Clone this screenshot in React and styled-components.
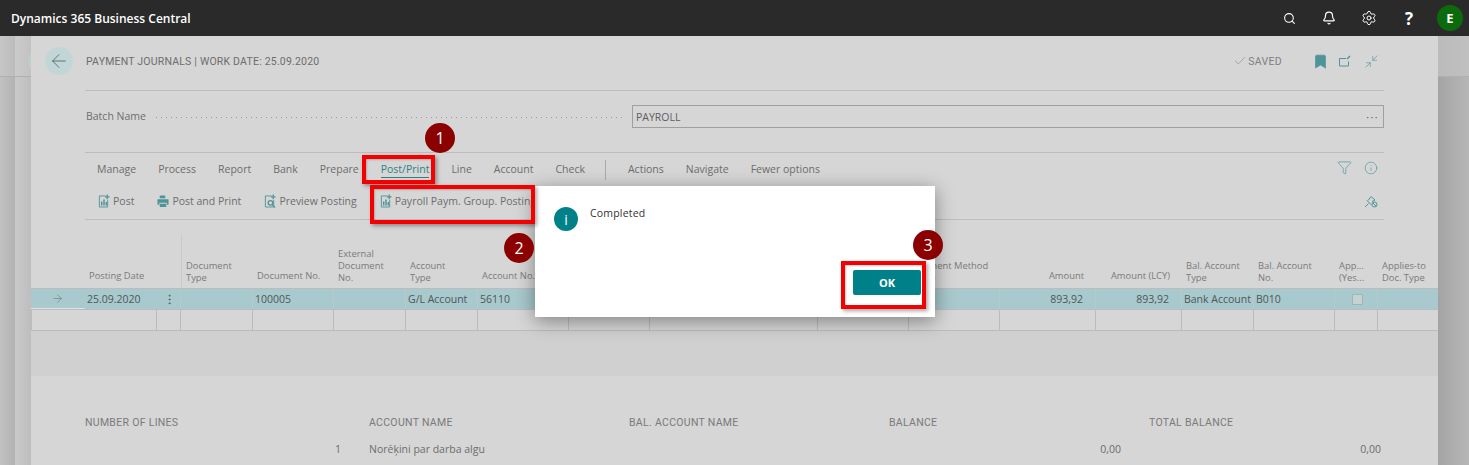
import styled, { createGlobalStyle } from "styled-components";
import { Search, Bell, Settings, Check, Filter, Info, ArrowLeft, ArrowRight, Minimize2, Bookmark, EllipsisVertical } from "lucide-react";

const GlobalStyle = createGlobalStyle`
  html, body { margin: 0; padding: 0; background: #c4c4c4; overflow: hidden; }
  body { font-family: "Open Sans", "Noto Sans", sans-serif; }
`;

const teal = "#4f9499";
const textGrey = "#6d6d6d";
const columns = "54px 72px 24px 72px 81px 72px 72px 91px 81px 168px 91px 91px 96px 86px 72px 81px 43px 60px";
const footerColumns = "284px 260px 260px 260px 260px";

const Page = styled.div`
  position: relative;
  width: 1469px;
  height: 465px;
  overflow: hidden;
`;

/* barra superior */
const TopBar = styled.header`
  height: 36px;
  background: #2a2a2a;
  display: flex;
  align-items: center;
  padding: 0 6px 0 11px;
  color: #fff;
`;
const Brand = styled.div`
  font-size: 12px;
  font-weight: 600;
  flex: 1;
`;
const TopIcons = styled.div`
  display: flex;
  align-items: center;
`;
const TopIcon = styled.div`
  width: 40px;
  display: flex;
  justify-content: center;
  align-items: center;
  font-size: ${(p) => (p.$big ? "17px" : "12px")};
  font-weight: 700;
`;
const Avatar = styled.div`
  width: 26px;
  height: 26px;
  margin-left: 8px;
  border-radius: 50%;
  background: #0b6a0b;
  display: flex;
  align-items: center;
  justify-content: center;
  font-size: 13px;
  font-weight: 700;
`;

/* fondo y panel */
const Stage = styled.main`
  display: grid;
  grid-template-columns: 31px 1407px 31px;
  height: 429px;
`;
const Gutter = styled.div`
  display: flex;
  flex-direction: column;
`;
const GutterTop = styled.div`
  height: 40px;
  border-bottom: 1px solid #b0b0b0;
  background: ${(p) =>
    p.$right
      ? "linear-gradient(90deg, #bbbbbb, #c0c0c0)"
      : "radial-gradient(circle at 43px 25px, #bdcfd0 14px, transparent 15px), linear-gradient(90deg, #c6c6c6 0, #bcbcbc 15px, #cbcbcb 15px, #c2c2c2 100%)"};
`;
const GutterBody = styled.div`
  flex: 1;
  background: ${(p) =>
    p.$right
      ? "linear-gradient(90deg, #a4a4a4 0%, #aeaeae 50%, #b6b6b6 100%)"
      : "linear-gradient(90deg, #c2c2c2 0, #b2b2b2 15px, #c9c9c9 15px, #bebebe 100%)"};
`;
const Panel = styled.section`
  background: #d6d6d6;
  display: flex;
  flex-direction: column;
  min-width: 0;
`;
const Content = styled.div`
  padding: 0 54px 0 54px;
`;
const HeaderRow = styled.div`
  display: flex;
  align-items: center;
  padding-bottom: 4px;
  height: 50px;
  border-bottom: 1px solid #bdbdbd;
`;
const BackButton = styled.div`
  width: 28px;
  height: 28px;
  margin-left: -40px;
  border-radius: 50%;
  background: #c2d6d7;
  color: #4f5f60;
  display: flex;
  align-items: center;
  justify-content: center;
`;
const PageTitle = styled.div`
  flex: 1;
  margin-left: 13px;
  font-family: Roboto, "Liberation Sans", sans-serif;
  font-size: 10.5px;
  letter-spacing: 0.2px;
  color: ${textGrey};
`;
const Saved = styled.div`
  display: flex;
  align-items: center;
  gap: 1px;
  font-family: Roboto, "Liberation Sans", sans-serif;
  font-size: 10.5px;
  letter-spacing: 0.3px;
  color: #808080;
  margin-right: 30px;
`;
const HeadIcons = styled.div`
  display: flex;
  align-items: center;
  gap: 13px;
  color: ${teal};
  margin-right: 5px;
`;
const SavedBookmark = styled(Bookmark)`
  margin-right: -4px;
`;

const BatchRow = styled.div`
  height: 47px;
  padding-top: 14px;
  display: flex;
  align-items: flex-start;
  border-bottom: 1px solid #bdbdbd;
`;
const BatchLabel = styled.div`
  font-size: 10.5px;
  line-height: 23px;
  color: ${textGrey};
  margin: 0 0 0 1px;
`;
const Dots = styled.div`
  flex: 1;
  height: 1px;
  margin: 12px 7px 0 10px;
  background: repeating-linear-gradient(90deg, #9a9a9a 0 1px, transparent 1px 5px);
`;
const BatchInput = styled.div`
  width: 752px;
  height: 23px;
  box-sizing: border-box;
  border: 1px solid #9f9f9f;
  display: flex;
  align-items: center;
  justify-content: space-between;
  padding: 0 4px 0 3px;
  font-size: 10.5px;
  color: #5d5d5d;
`;
const InputDots = styled.span`
  letter-spacing: 1.5px;
`;

const RibbonRow = styled.nav`
  height: 33px;
  display: flex;
  align-items: center;
  gap: 22px;
  padding-left: 12px;
  font-size: 10.5px;
  color: ${textGrey};
`;
const RibbonItem = styled.span`
  padding-bottom: 1px;
  color: ${(p) => (p.$active ? "#2e8088" : "inherit")};
  border-bottom: 1px solid ${(p) => (p.$active ? "#2e8088" : "transparent")};
`;
const RibbonDivider = styled.i`
  width: 1px;
  height: 20px;
  margin-left: -2px;
  background: #a9a9a9;
`;
const RibbonEnd = styled.div`
  margin-left: auto;
  display: flex;
  gap: 12px;
  align-items: center;
  color: ${teal};
  padding: 0 6px 4px 0;
`;
const ActionRow = styled.div`
  height: 30px;
  padding: 0 0 3px 13px;
  display: flex;
  align-items: center;
  gap: 23px;
  border-bottom: 1px solid #bdbdbd;
  font-size: 10.5px;
  color: ${textGrey};
  white-space: nowrap;
`;
const ActionItem = styled.span`
  display: inline-flex;
  align-items: center;
  gap: 3px;
`;
const PinWrap = styled.span`
  margin-left: auto;
  padding-right: 6px;
  color: ${teal};
  display: flex;
`;

/* tabla */
const TableHead = styled.div`
  display: grid;
  grid-template-columns: ${columns};
  height: 69px;
  border-bottom: 1px solid #bcbcbc;
  box-sizing: border-box;
`;
const HeadCell = styled.div`
  display: flex;
  align-items: flex-end;
  padding: 0 3px ${(p) => (p.$single ? "6px" : "4px")} 4px;
  margin-top: 14px;
  font-size: 9.4px;
  line-height: 12px;
  white-space: pre-line;
  color: #7a7a7a;
  justify-content: ${(p) => (p.$right ? "flex-end" : "flex-start")};
  padding-right: ${(p) => (p.$right ? "12px" : "3px")};
  border-left: ${(p) => (p.$rule ? "1px solid #cbcbcb" : "0")};
`;
const Row = styled.div`
  display: grid;
  grid-template-columns: ${columns};
  height: 21px;
  box-sizing: border-box;
  background: ${(p) => (p.$selected ? "#a8c9cd" : "transparent")};
  border-bottom: 1px solid #bcbcbc;
`;
const Cell = styled.div`
  display: flex;
  align-items: center;
  justify-content: ${(p) => (p.$right ? "flex-end" : p.$center ? "center" : "flex-start")};
  padding: ${(p) => (p.$right ? "0 12px 0 0" : "0 0 0 2px")};
  font-size: 10.5px;
  color: #4f5757;
  white-space: nowrap;
  overflow: hidden;
  box-sizing: border-box;
  border-left: ${(p) => (p.$first ? "1px solid #bcbcbc" : "0")};
  border-right: ${(p) => (p.$rule ? `1px solid ${p.$ruleColor || "#bcbcbc"}` : "0")};
`;
const MarkerCell = styled(Cell)`
  padding: 0 0 0 20px;
  color: #5f7478;
  border-bottom: 1px solid #dbe3e3;
`;
const CheckBox = styled.span`
  width: 9px;
  height: 9px;
  background: #c6d2d2;
  border: 1px solid #9db5b8;
  border-radius: 1px;
`;
const Band = styled.div`
  height: 45px;
  background: #d0d0d0;
`;

/* pie */
const Footer = styled.div`
  padding: 40px 0 0 54px;
  display: grid;
  grid-template-columns: ${footerColumns};
  grid-auto-rows: 26px;
  font-size: 10.5px;
  color: ${textGrey};
`;
const FooterLabel = styled.div`
  font-family: Roboto, "Liberation Sans", sans-serif;
  letter-spacing: 0.3px;
  font-size: 10.5px;
  color: #7a7a7a;
`;
const FooterValue = styled.div`
  text-align: ${(p) => (p.$right ? "right" : "left")};
  padding-right: ${(p) => (p.$right ? "28px" : "0")};
`;

/* dialogo y anotaciones */
const Dialog = styled.div`
  position: absolute;
  left: 535px;
  top: 186px;
  width: 400px;
  height: 131px;
  background: #fff;
  box-shadow: 0 4px 18px rgba(0, 0, 0, 0.4);
  display: flex;
  flex-direction: column;
  box-sizing: border-box;
  padding: 20px 14px 22px 19px;
`;
const DialogBody = styled.div`
  display: flex;
  gap: 12px;
  flex: 1;
  font-size: 10.5px;
  color: #333;
`;
const InfoDot = styled.div`
  width: 24px;
  height: 24px;
  border-radius: 50%;
  background: #00818a;
  color: #fff;
  display: flex;
  align-items: center;
  justify-content: center;
  font-size: 14px;
  margin-top: 1px;
`;
const DialogText = styled.div`
  letter-spacing: 0.2px;
  line-height: 14px;
`;
const OkButton = styled.button`
  align-self: flex-end;
  width: 68px;
  height: 25px;
  border: 0;
  border-radius: 2px;
  background: #00818a;
  color: #fff;
  font-family: inherit;
  font-size: 11px;
  font-weight: 700;
`;
const RedBox = styled.div`
  position: absolute;
  box-sizing: border-box;
  left: ${(p) => p.$x}px;
  top: ${(p) => p.$y}px;
  width: ${(p) => p.$w}px;
  height: ${(p) => p.$h}px;
  border: 4px solid #f40000;
  box-shadow: 2px 2px 4px rgba(0, 0, 0, 0.35), inset 1px 1px 2px rgba(0, 0, 0, 0.2);
`;
const Badge = styled.div`
  position: absolute;
  left: ${(p) => p.$x - 15}px;
  top: ${(p) => p.$y - 15}px;
  width: 30px;
  height: 30px;
  border-radius: 50%;
  background: #8b0000;
  color: #fff;
  display: flex;
  align-items: center;
  justify-content: center;
  font-size: 16px;
`;

const DocIcon = ({ preview }) => (
  <svg width="12" height="14" viewBox="0 0 13 14" fill="none" stroke={teal} strokeWidth="1">
    <path d="M8 1.5H1.5v12h9V6" />
    <path d="M10 0v5M7.5 2.5h5" strokeWidth="1.4" />
    {preview ? (
      <>
        <circle cx="7" cy="9" r="2.5" strokeWidth="1.4" />
        <path d="M9 11l3 3" strokeWidth="1.4" />
      </>
    ) : (
      <path d="M4 12V7.5M6.5 12V5.5M9 12V8" strokeWidth="1.6" />
    )}
  </svg>
);
const PrintIcon = () => (
  <svg width="12" height="14" viewBox="0 0 13 14" fill={teal}>
    <path d="M3 1h6v3H3zM0.5 5h12v6h-2V9h-8v2h-2zM3 10h7v3.5H3z" />
    <path d="M10.5 0v3.5M8.7 1.7h3.6" stroke="#d6d6d6" strokeWidth="1" />
  </svg>
);
const OpenIcon = () => (
  <svg width="13" height="13" viewBox="0 0 13 13" fill="none" stroke="currentColor">
    <path d="M8 3.5H1.5v7.5h9V6.5" />
    <path d="M9 4l3-3" strokeWidth="1.4" />
  </svg>
);
const PinIcon = () => (
  <svg width="14" height="14" viewBox="0 0 14 14" fill="none" stroke="currentColor">
    <path d="M1 13l3.5-3.5M2.8 6.3l4.9 4.9M4 6.5l3-4 4 3.5-3 1.5" />
    <circle cx="10.5" cy="10.5" r="2.5" />
    <path d="M8.8 8.8l3.4 3.4" />
  </svg>
);

const heads = [
  { key: "m" },
  { t: "Posting Date", single: true },
  { key: "d" },
  { t: "Document\nType", rule: true },
  { t: "Document No.", single: true },
  { t: "External\nDocument\nNo." },
  { t: "Account\nType" },
  { t: "Account No.", single: true },
  { key: "x1" },
  { key: "x2" },
  { key: "x3" },
  { t: "Payment Method\nCode" },
  { t: "Amount", single: true, right: true },
  { t: "Amount (LCY)", single: true, right: true },
  { t: "Bal. Account\nType" },
  { t: "Bal. Account\nNo." },
  { t: "App...\n(Yes..." },
  { t: "Applies-to\nDoc. Type" },
];

// celdas de la columna 3 a la 15
const selected = ["", "100005", "", "G/L Account", "56110", "", "", "", "", "893,92", "893,92", "Bank Account", "B010"];
const isRight = (i) => i === 9 || i === 10;

export default function App() {
  return (
    <Page>
      <GlobalStyle />
      <TopBar>
        <Brand>Dynamics 365 Business Central</Brand>
        <TopIcons>
          <TopIcon><Search size={13} /></TopIcon>
          <TopIcon><Bell size={14} /></TopIcon>
          <TopIcon><Settings size={16} strokeWidth={1.5} /></TopIcon>
          <TopIcon $big>?</TopIcon>
          <Avatar>E</Avatar>
        </TopIcons>
      </TopBar>
      <Stage>
        <Gutter>
          <GutterTop />
          <GutterBody />
        </Gutter>
        <Panel>
          <Content>
            <HeaderRow>
              <BackButton><ArrowLeft size={22} strokeWidth={0.9} /></BackButton>
              <PageTitle>PAYMENT JOURNALS | WORK DATE: 25.09.2020</PageTitle>
              <Saved><Check size={14} strokeWidth={1} />SAVED</Saved>
              <HeadIcons>
                <SavedBookmark size={17} fill={teal} strokeWidth={1} />
                <OpenIcon />
                <Minimize2 size={15} strokeWidth={1} />
              </HeadIcons>
            </HeaderRow>
            <BatchRow>
              <BatchLabel>Batch Name</BatchLabel>
              <Dots />
              <BatchInput>PAYROLL<InputDots>···</InputDots></BatchInput>
            </BatchRow>
            <RibbonRow>
              <RibbonItem>Manage</RibbonItem>
              <RibbonItem>Process</RibbonItem>
              <RibbonItem>Report</RibbonItem>
              <RibbonItem>Bank</RibbonItem>
              <RibbonItem>Prepare</RibbonItem>
              <RibbonItem $active>Post/Print</RibbonItem>
              <RibbonItem>Line</RibbonItem>
              <RibbonItem>Account</RibbonItem>
              <RibbonItem>Check</RibbonItem>
              <RibbonDivider />
              <RibbonItem>Actions</RibbonItem>
              <RibbonItem>Navigate</RibbonItem>
              <RibbonItem>Fewer options</RibbonItem>
              <RibbonEnd>
                <Filter size={15} strokeWidth={1.1} />
                <Info size={14} strokeWidth={1.1} />
              </RibbonEnd>
            </RibbonRow>
            <ActionRow>
              <ActionItem><DocIcon />Post</ActionItem>
              <ActionItem><PrintIcon />Post and Print</ActionItem>
              <ActionItem><DocIcon preview />Preview Posting</ActionItem>
              <ActionItem><DocIcon />Payroll Paym. Group. Posting</ActionItem>
              <PinWrap><PinIcon /></PinWrap>
            </ActionRow>
          </Content>
          <TableHead>
            {heads.map((h) => (
              <HeadCell key={h.t || h.key} $single={h.single} $right={h.right} $rule={h.rule}>
                <span>{h.t}</span>
              </HeadCell>
            ))}
          </TableHead>
          <Row $selected>
            <MarkerCell><ArrowRight size={13} strokeWidth={1} /></MarkerCell>
            <Cell>25.09.2020</Cell>
            <Cell $center $rule $ruleColor="#b7c9cb"><EllipsisVertical size={13} strokeWidth={1.4} /></Cell>
            {selected.map((t, i) => (
              <Cell key={i} $right={isRight(i)} $rule $ruleColor="#b7c9cb">{t}</Cell>
            ))}
            <Cell $center $rule $ruleColor="#b7c9cb"><CheckBox /></Cell>
            <Cell />
          </Row>
          <Row>
            <Cell $first />
            <Cell $rule />
            <Cell $rule />
            {selected.map((t, i) => (
              <Cell key={i} $rule />
            ))}
            <Cell $rule />
            <Cell />
          </Row>
          <Band />
          <Footer>
            <FooterLabel>NUMBER OF LINES</FooterLabel>
            <FooterLabel>ACCOUNT NAME</FooterLabel>
            <FooterLabel>BAL. ACCOUNT NAME</FooterLabel>
            <FooterLabel>BALANCE</FooterLabel>
            <FooterLabel>TOTAL BALANCE</FooterLabel>
            <FooterValue $right>1</FooterValue>
            <FooterValue>Norēķini par darba algu</FooterValue>
            <FooterValue />
            <FooterValue $right>0,00</FooterValue>
            <FooterValue $right>0,00</FooterValue>
          </Footer>
        </Panel>
        <Gutter>
          <GutterTop $right />
          <GutterBody $right />
        </Gutter>
      </Stage>
      <Dialog>
        <DialogBody>
          <InfoDot>i</InfoDot>
          <DialogText>Completed</DialogText>
        </DialogBody>
        <OkButton>OK</OkButton>
      </Dialog>
      <RedBox $x={362} $y={155} $w={73} $h={29} />
      <RedBox $x={370} $y={185} $w={165} $h={39} />
      <RedBox $x={841} $y={261} $w={85} $h={48} />
      <Badge $x={440} $y={138}>1</Badge>
      <Badge $x={519} $y={248}>2</Badge>
      <Badge $x={928} $y={245}>3</Badge>
    </Page>
  );
}
